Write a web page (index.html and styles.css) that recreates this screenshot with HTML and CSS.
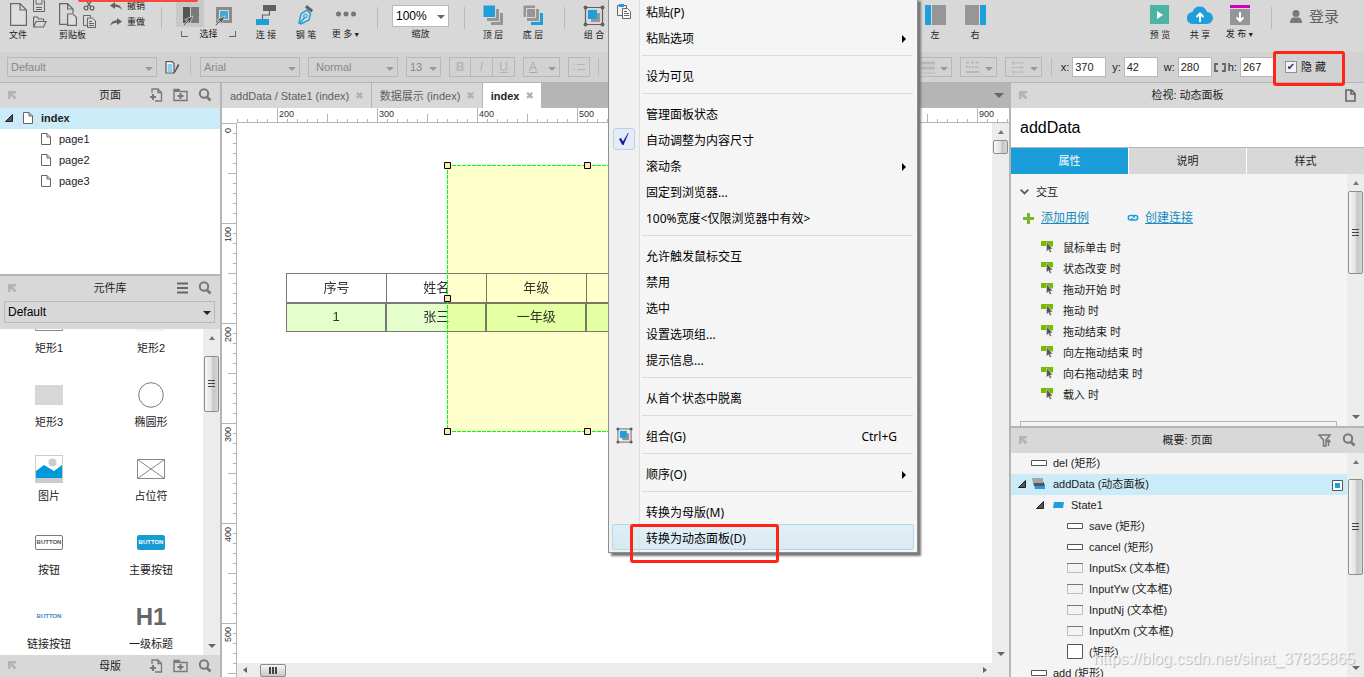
FILE: index.html
```html
<!DOCTYPE html>
<html lang="zh-CN">
<head>
<meta charset="utf-8">
<title>addData</title>
<link rel="stylesheet" href="styles.css">
</head>
<body>
<svg class="defs" aria-hidden="true">
  <symbol id="i-dock" viewBox="0 0 9 9"><path d="M0 0h8v2.500H4.500l4 4-2 2-4-4V8H0z" fill="#b4b4b4"/></symbol>
  <symbol id="i-search" viewBox="0 0 14 14"><circle cx="6" cy="5.500" r="4.200" fill="none" stroke="#787878" stroke-width="2"/><path d="M9 9l3.500 3.500" stroke="#787878" stroke-width="2.600"/></symbol>
  <symbol id="i-addpage" viewBox="0 0 14 14"><path d="M3 5V1h6l3.500 3.500V13H6M9 1v3.500h3.500" fill="none" stroke="#787878" stroke-width="1.300"/><path d="M4 6v6M1 9h6" stroke="#787878" stroke-width="2"/></symbol>
  <symbol id="i-addfolder" viewBox="0 0 15 14"><path d="M1 12.500V1.500h5l1 2h7v9z" fill="none" stroke="#787878" stroke-width="1.400"/><path d="M1 2h5v2H1z" fill="#787878"/><path d="M7.500 5v6M4.500 8h6" stroke="#787878" stroke-width="2"/></symbol>
  <symbol id="i-page" viewBox="0 0 10 12"><path d="M.5.5h5.500l3.500 3.500v7.500H.5zM6 .5V4h3.500" fill="#fff" stroke="#666"/></symbol>
  <symbol id="i-open" viewBox="0 0 8 8"><path d="M.5 7.500L7.500.5v7z" fill="#555" stroke="#222"/></symbol>
  <symbol id="i-event" viewBox="0 0 12 12"><path d="M0 0h12v5.500H7L5 2v3H0z" fill="#77bc04"/><path d="M5.500 1v9.500l2-2 1.500 3 1.500-.8-1.400-2.700h2.600z" fill="#555" stroke="#eee" stroke-width=".4"/></symbol>
  <symbol id="i-rect" viewBox="0 0 16 6"><path d="M.5.5h15v5H.5z" fill="#fff" stroke="#555"/></symbol>
  <symbol id="i-field" viewBox="0 0 16 10"><path d="M.5.5h15v9H.5z" fill="#f4f4f4" stroke="#bdbdbd"/><path d="M0 .5h16" stroke="#777"/></symbol>
  <symbol id="i-group" viewBox="0 0 22 22"><path d="M2.500 2.500h17v17h-17z" fill="none" stroke="#606060" stroke-width="1.200"/><path d="M8 8h9v9H8z" fill="#969696"/><path d="M5 5h9v9H5z" fill="#1e9edb"/><g fill="#606060"><circle cx="2.500" cy="2.500" r="2"/><circle cx="19.500" cy="2.500" r="2"/><circle cx="2.500" cy="19.500" r="2"/><circle cx="19.500" cy="19.500" r="2"/></g></symbol>
  <symbol id="i-cursor" viewBox="0 0 12 12"><path d="M0 11l5-5-3-1 9-4-4 9-1-3-5 5z" fill="#555" stroke="#e6e6e6" stroke-width=".7"/></symbol>
</svg>

<header class="toolbar">
  <div class="pair file">
    <button class="tool"><svg width="17" height="23" viewBox="0 0 17 23"><path d="M.6.600h9.400l6.400 6.400v15.400H.6zM10 .6V7h6.400" fill="#dedede" stroke="#666" stroke-width="1.200"/></svg><span>文件</span></button>
    <div class="stack">
      <svg width="12" height="12" viewBox="0 0 12 12"><path d="M.5 0v11.500h11V1l-1-1M3 0v4h6V0M3 7.500h6M3 9.500h6" fill="none" stroke="#666"/></svg>
      <svg width="14" height="12" viewBox="0 0 14 12"><path d="M.6 11V1h4l1 2h5v2.500M.6 11l2.500-5.500h10L10.500 11z" fill="none" stroke="#666" stroke-width="1.100"/></svg>
    </div>
  </div>
  <div class="pair clip">
    <button class="tool start"><svg width="18" height="23" viewBox="0 0 18 23"><path d="M8 21.400H.6V.6h8l5.400 5.400v4M8.600.6v5.400H14" fill="none" stroke="#666" stroke-width="1.200"/><path d="M8.600 11h5.400l3.400 3.400v8H8.600z" fill="#dedede" stroke="#666" stroke-width="1.200"/></svg><span>剪贴板</span></button>
    <div class="stack">
      <svg width="12" height="12" viewBox="0 0 12 12"><path d="M2 0l6 8M10 0L4 8" stroke="#666" stroke-width="1.300"/><g fill="none" stroke="#666" stroke-width="1.300"><circle cx="3" cy="9" r="1.900"/><circle cx="9" cy="9" r="1.900"/></g></svg>
      <svg width="13" height="13" viewBox="0 0 13 13"><path d="M4 10.500H.5V.5h7v2M4.500 3h5l3 3v6.500h-8zM6 6.500h3M6 8.500h5M6 10.500h5" fill="none" stroke="#666"/></svg>
    </div>
  </div>
  <div class="history">
    <button><svg width="12" height="9" viewBox="0 0 12 9"><path d="M5 0L0 3.500 5 7V4.700c3 0 5 .8 7 3.300C11 4.500 9 2.500 5 2.300z" fill="#606060"/></svg>撤销</button>
    <button><svg width="12" height="9" viewBox="0 0 12 9"><path d="M7 0l5 3.500L7 7V4.700C4 4.700 2 5.500 0 8c1-3.500 3-5.500 7-5.700z" fill="#606060"/></svg>重做</button>
  </div>
  <i class="divider"></i>
  <div class="select-mode">
    <div class="modes">
      <button class="on" aria-label="相交选中"><svg width="18" height="20" viewBox="0 0 18 20"><path d="M0 0h7v16H0z" fill="#555"/><path d="M8 0h8v16H8z" fill="#7a7a7a"/><use href="#i-cursor" x="0" y="8" width="11" height="11"/></svg></button>
      <button aria-label="包含选中"><svg width="18" height="20" viewBox="0 0 18 20"><path d="M2.500 1.500h13v13h-13z" fill="#d8d8d8" stroke="#8a8a8a" stroke-width="3"/><path d="M5 4h8v8H5z" fill="#3fa9de"/><use href="#i-cursor" x="0" y="8" width="11" height="11"/></svg></button>
    </div>
    <div class="mode-label"><i></i><span>选择</span><i class="r"></i></div>
  </div>
  <button class="tool"><svg width="20" height="20" viewBox="0 0 20 20"><path d="M7 0h13v6H7z" fill="#606060"/><path d="M0 14h13v6H0z" fill="#1e9edb"/><path d="M13.500 6v4h-7v4" fill="none" stroke="#606060" stroke-width="1.200"/></svg><span>连 接</span></button>
  <button class="tool"><svg width="16" height="20" viewBox="0 0 16 20"><path d="M9 0l6 5-1.500 2.500L7 2.500z" fill="#606060"/><path d="M1 18L3 9l6-4 3.500 4L11 15l-8 4zM2 18l5-6" fill="none" stroke="#1e9edb" stroke-width="1.400"/><circle cx="7.500" cy="11" r="1.800" fill="none" stroke="#1e9edb"/></svg><span>钢 笔</span></button>
  <button class="tool"><svg width="20" height="20" viewBox="0 0 20 20"><g fill="#757575"><circle cx="2.500" cy="9" r="2.500"/><circle cx="10" cy="9" r="2.500"/><circle cx="17.500" cy="9" r="2.500"/></g></svg><span>更 多<b>▼</b></span></button>
  <i class="divider"></i>
  <div class="zoom">
    <span class="drop"><select id="zoom"><option>100%</option></select></span>
    <label for="zoom">缩放</label>
  </div>
  <i class="divider"></i>
  <button class="tool"><svg width="20" height="20" viewBox="0 0 20 20"><path d="M8 8h12v12H8z" fill="#969696"/><path d="M3.500 3.500h13v13h-13z" fill="#969696" stroke="#d8d8d8"/><path d="M0 0h12.500v12.500H0z" fill="#1e9edb" stroke="#d8d8d8"/></svg><span>顶 层</span></button>
  <button class="tool"><svg width="20" height="20" viewBox="0 0 20 20"><path d="M8 8h12v12H8z" fill="#1e9edb"/><path d="M3.500 3.500h13v13h-13zM0 0h12.500v12.500H0z" fill="#969696" stroke="#d8d8d8"/></svg><span>底 层</span></button>
  <i class="divider"></i>
  <button class="tool"><svg width="22" height="22"><use href="#i-group"/></svg><span>组 合</span></button>
  <div class="align">
    <button class="tool"><svg width="21" height="20" viewBox="0 0 21 20"><path d="M0 0h6v20H0z" fill="#1e9edb"/><path d="M7 0h14v20H7z" fill="#969696"/></svg><span>左</span></button>
    <button class="tool"><svg width="21" height="20" viewBox="0 0 21 20"><path d="M15 0h6v20h-6z" fill="#1e9edb"/><path d="M0 0h14v20H0z" fill="#969696"/></svg><span>右</span></button>
  </div>
  <div class="publish">
    <button class="tool"><svg width="19" height="19" viewBox="0 0 19 19"><path d="M0 0h19v19H0z" fill="#4db3a4"/><path d="M7 6l6 4-6 4z" fill="#fff"/></svg><span>预 览</span></button>
    <button class="tool"><svg width="26" height="20" viewBox="0 0 26 20"><path d="M6 19a6 6 0 01-.5-12A7.500 7.500 0 0120 7a6 6 0 010 12z" fill="#1e9edb"/><path d="M13 17V9M9.500 12L13 8.500l3.500 3.500" fill="none" stroke="#fff" stroke-width="2"/></svg><span>共 享</span></button>
    <button class="tool"><svg width="20" height="20" viewBox="0 0 20 20"><path d="M0 0h20v3H0z" fill="#d400b8"/><path d="M0 4h20v16H0z" fill="#969696"/><path d="M10 7v9M6.500 12.500L10 16l3.500-3.500" fill="none" stroke="#fff" stroke-width="2"/></svg><span>发 布<b>▼</b></span></button>
    <i class="divider"></i>
    <button class="login"><svg width="12" height="13" viewBox="0 0 12 13"><circle cx="6" cy="3.500" r="3.500" fill="#7a7a7a"/><path d="M0 13c0-4 2-5.500 4-5.500h4c2 0 4 1.500 4 5.500z" fill="#7a7a7a"/></svg>登录</button>
  </div>
</header>

<div class="format">
  <div class="format-left">
    <span class="drop w150"><select aria-label="样式"><option>Default</option></select></span>
    <button class="plain" aria-label="样式管理"><svg width="15" height="13" viewBox="0 0 15 13"><path d="M1 .6h6l2 2V12H1z" fill="#fff" stroke="#555" stroke-width="1.200"/><path d="M2.500 4h5M2.500 6h5M2.500 8h5M2.500 10h5" stroke="#1e9edb"/><path d="M9 11l4-8 1.500 1-4 7-2 1.500z" fill="#555"/></svg></button>
    <i class="divider"></i>
    <span class="drop w100"><select aria-label="字体"><option>Arial</option></select></span>
    <span class="drop w90"><select aria-label="字形"><option>Normal</option></select></span>
    <span class="drop w35"><select aria-label="字号"><option>13</option></select></span>
    <div class="biu"><button><b>B</b></button><button><em>I</em></button><button><u>U</u></button></div>
    <button class="swatch"><u>A</u></button>
    <button class="bullets" aria-label="项目符号"><svg width="12" height="8" viewBox="0 0 12 8"><path d="M4 1.500h8M4 6.500h8" stroke="#b4b4b4"/><path d="M0 1.500h2M0 6.500h2" stroke="#9cc8dc"/></svg></button>
    <i class="divider"></i>
  </div>
  <div class="format-right">
    <button class="swatch" aria-label="线宽"><svg width="14" height="13" viewBox="0 0 14 13"><path d="M0 2h14M0 7h14" stroke="#b8b8b8" stroke-width="3"/><path d="M0 12h14" stroke="#b8b8b8"/></svg></button>
    <button class="swatch" aria-label="线型"><svg width="13" height="13" viewBox="0 0 13 13"><path d="M0 1.500h13" stroke="#b8b8b8" stroke-width="2" stroke-dasharray="3 2"/><path d="M0 6h13" stroke="#b8b8b8" stroke-width="2" stroke-dasharray="2 1"/><path d="M0 11h13" stroke="#b8b8b8" stroke-width="2"/></svg></button>
    <button class="swatch" aria-label="箭头"><svg width="13" height="13" viewBox="0 0 13 13"><path d="M1 2h12M0 6.500h12M1 11h12M3 0L1 2l2 2M10 4.500l2 2-2 2M3 9l-2 2 2 2" fill="none" stroke="#b8b8b8"/></svg></button>
    <i class="divider"></i>
    <label>x:<input value="370"></label>
    <label>y:<input value="42"></label>
    <label>w:<input value="280"></label>
    <svg class="lock" width="12" height="9" viewBox="0 0 12 9"><path d="M4 1H1v7h3M8 1h3v7H8" fill="none" stroke="#666" stroke-width="1.800"/></svg>
    <label class="h">h:<input value="267"></label>
    <label class="hide"><input type="checkbox" checked>隐 藏</label>
  </div>
</div>

<main class="work">
  <aside class="left">
    <div class="head"><svg width="9" height="9"><use href="#i-dock"/></svg><h2>页面</h2><div class="acts"><svg width="14" height="14"><use href="#i-addpage"/></svg><svg width="15" height="14"><use href="#i-addfolder"/></svg><svg width="14" height="14"><use href="#i-search"/></svg></div></div>
    <ul class="pages">
      <li class="root"><svg width="8" height="8"><use href="#i-open"/></svg><svg width="10" height="12"><use href="#i-page"/></svg>index</li>
      <li><svg width="10" height="12"><use href="#i-page"/></svg>page1</li>
      <li><svg width="10" height="12"><use href="#i-page"/></svg>page2</li>
      <li><svg width="10" height="12"><use href="#i-page"/></svg>page3</li>
    </ul>
    <div class="head lib"><svg width="9" height="9"><use href="#i-dock"/></svg><h2>元件库</h2><div class="acts"><svg width="11" height="12" viewBox="0 0 11 12"><path d="M0 1.500h11M0 6h11M0 10.500h11" stroke="#666" stroke-width="2"/></svg><svg width="14" height="14"><use href="#i-search"/></svg></div></div>
    <div class="libpick"><span class="drop"><select aria-label="元件库"><option>Default</option></select></span></div>
    <div class="library">
      <div class="widgets">
        <figure><svg width="28" height="20" viewBox="0 0 28 20"><path d="M.5.500h27v19H.5z" fill="#fff" stroke="#888"/></svg><figcaption>矩形1</figcaption></figure>
        <figure><svg width="28" height="20"><path d="M0 0h28v20H0z" fill="#f2f2f2"/></svg><figcaption>矩形2</figcaption></figure>
        <figure><svg width="28" height="20"><path d="M0 0h28v20H0z" fill="#d7d7d7"/></svg><figcaption>矩形3</figcaption></figure>
        <figure><svg width="26" height="26"><circle cx="13" cy="13" r="12.300" fill="#fff" stroke="#797979"/></svg><figcaption>椭圆形</figcaption></figure>
        <figure><svg width="28" height="28" viewBox="0 0 28 28"><path d="M0 0h28v28H0z" fill="#ccc"/><path d="M1 1h26v22H1z" fill="#fff"/><circle cx="17.500" cy="7.500" r="4" fill="#ccc"/><path d="M1 16l8-6 10 6 8-6v13H1z" fill="#0099dc"/></svg><figcaption>图片</figcaption></figure>
        <figure><svg width="28" height="20"><path d="M.5.500h27v19H.5zL27.500 19.500M27.500.5L.5 19.500" fill="none" stroke="#888"/></svg><figcaption>占位符</figcaption></figure>
        <figure><span class="mini plain-btn">BUTTON</span><figcaption>按钮</figcaption></figure>
        <figure><span class="mini primary">BUTTON</span><figcaption>主要按钮</figcaption></figure>
        <figure><span class="mini link">BUTTON</span><figcaption>链接按钮</figcaption></figure>
        <figure><span class="h1">H1</span><figcaption>一级标题</figcaption></figure>
      </div>
      <div class="vbar"><i class="up"></i><i class="thumb t1"></i><i class="down"></i></div>
    </div>
    <div class="head foot"><svg width="9" height="9"><use href="#i-dock"/></svg><h2>母版</h2><div class="acts"><svg width="14" height="14"><use href="#i-addpage"/></svg><svg width="15" height="14"><use href="#i-addfolder"/></svg><svg width="14" height="14"><use href="#i-search"/></svg></div></div>
  </aside>

  <section class="center">
    <nav class="tabs">
      <button>addData / State1 (index)<span>✖</span></button>
      <button>数据展示 (index)<span>✖</span></button>
      <button class="active">index<span>✖</span></button>
      <i class="more"></i>
    </nav>
    <div class="stage">
      <div class="corner"></div>
      <svg class="hruler" width="100%" height="15">
        <defs><pattern id="hp" x="40" width="100" height="15" patternUnits="userSpaceOnUse"><path d="M.5 0v15M50.500 6v9M10.500 11v4M20.500 11v4M30.500 11v4M40.500 11v4M60.500 11v4M70.500 11v4M80.500 11v4M90.500 11v4" stroke="#b5b5b5"/></pattern></defs>
        <rect width="100%" height="15" fill="url(#hp)"/><path d="M0 14.500h3000" stroke="#b5b5b5"/>
        <text x="42" y="9">200</text><text x="142" y="9">300</text><text x="242" y="9">400</text><text x="342" y="9">500</text><text x="742" y="9">900</text>
      </svg>
      <svg class="vruler" width="15" height="100%">
        <defs><pattern id="vp" width="15" height="100" patternUnits="userSpaceOnUse"><path d="M0 .5h15M6 50.500h9M11 10.500h4M11 20.500h4M11 30.500h4M11 40.500h4M11 60.500h4M11 70.500h4M11 80.500h4M11 90.500h4" stroke="#b5b5b5"/></pattern></defs>
        <rect width="15" height="100%" fill="url(#vp)"/><path d="M14.500 0v3000" stroke="#b5b5b5"/>
        <text transform="translate(9 10) rotate(-90)">0</text><text transform="translate(9 119) rotate(-90)">100</text><text transform="translate(9 219) rotate(-90)">200</text><text transform="translate(9 319) rotate(-90)">300</text><text transform="translate(9 419) rotate(-90)">400</text><text transform="translate(9 519) rotate(-90)">500</text>
      </svg>
      <div class="canvas">
        <table class="grid">
          <tr><th>序号</th><th>姓名</th><th>年级</th><th></th></tr>
          <tr><td>1</td><td>张三</td><td>一年级</td><td></td></tr>
        </table>
        <div class="panel"></div>
        <svg class="outline-box" width="288" height="274" viewBox="0 0 288 274"><path d="M4 4.500h280M4 270.500h280M4.500 4v267M284.500 4v267" stroke="#0f0" stroke-dasharray="4 1"/><g fill="#ffe9b0" stroke="#000"><path d="M1.500 1.500h6v6h-6zM141.500 1.500h6v6h-6zM1.500 134.500h6v6h-6zM1.500 267.500h6v6h-6zM141.500 267.500h6v6h-6z"/></g></svg>
      </div>
      <div class="vbar"><i class="up"></i><i class="thumb t2"></i><i class="down"></i></div>
      <div class="hbar"><i class="lt"></i><i class="thumb"></i><i class="rt"></i></div>
    </div>
  </section>

  <aside class="right">
    <div class="head"><svg width="9" height="9"><use href="#i-dock"/></svg><h2>检视: 动态面板</h2><div class="acts"><svg width="11" height="13" viewBox="0 0 11 13"><path d="M1 1h5.500L10 4.500V12H1zM6 1v4h4" fill="none" stroke="#666" stroke-width="1.600"/></svg></div></div>
    <div class="name">addData</div>
    <div class="ptabs"><button class="on">属性</button><button>说明</button><button>样式</button></div>
    <div class="props">
      <div class="body">
        <h3><svg width="9" height="6" viewBox="0 0 9 6"><path d="M.7.700l3.800 3.800L8.300.7" fill="none" stroke="#555c68" stroke-width="1.800"/></svg>交互</h3>
        <div class="links"><svg width="11" height="11"><path d="M5.500 0v11M0 5.500h11" stroke="#77b82a" stroke-width="3"/></svg><a href="#">添加用例</a><svg class="chain" width="12" height="8" viewBox="0 0 12 8"><path d="M7 6H3.500a2.200 2.200 0 010-4.400H5A2.200 2.200 0 017.200 4M5 1.600h3.500a2.200 2.200 0 010 4.400H7A2.200 2.200 0 014.800 4" fill="none" stroke="#1e9edb" stroke-width="1.500"/></svg><a href="#">创建连接</a></div>
        <ul class="events">
          <li><svg width="12" height="12"><use href="#i-event"/></svg>鼠标单击 时</li>
          <li><svg width="12" height="12"><use href="#i-event"/></svg>状态改变 时</li>
          <li><svg width="12" height="12"><use href="#i-event"/></svg>拖动开始 时</li>
          <li><svg width="12" height="12"><use href="#i-event"/></svg>拖动 时</li>
          <li><svg width="12" height="12"><use href="#i-event"/></svg>拖动结束 时</li>
          <li><svg width="12" height="12"><use href="#i-event"/></svg>向左拖动结束 时</li>
          <li><svg width="12" height="12"><use href="#i-event"/></svg>向右拖动结束 时</li>
          <li><svg width="12" height="12"><use href="#i-event"/></svg>载入 时</li>
        </ul>
        <div class="moreevents"></div>
      </div>
      <div class="vbar"><i class="up"></i><i class="thumb t3"></i><i class="down"></i></div>
    </div>
    <div class="head outline-head"><svg width="9" height="9"><use href="#i-dock"/></svg><h2>概要: 页面</h2><div class="acts"><svg width="14" height="13" viewBox="0 0 14 13"><path d="M1 1h11L8 6v6H5.500V6zM10.500 12V6M8.500 8l2-2 2 2" fill="none" stroke="#787878" stroke-width="1.500"/></svg><svg width="14" height="14"><use href="#i-search"/></svg></div></div>
    <div class="outline">
      <ul class="tree">
        <li class="d1"><svg width="16" height="6"><use href="#i-rect"/></svg>del (矩形)</li>
        <li class="d1 sel"><svg class="tri" width="8" height="8"><use href="#i-open"/></svg><svg width="13" height="12" viewBox="0 0 13 12"><path d="M2 6h11v5H3z" fill="#1e9edb"/><path d="M1 4h11v4H2z" fill="#555"/><path d="M0 0h11v5H1z" fill="#a5a5a5"/></svg>addData (动态面板)<svg class="vis" width="11" height="11"><path d="M.5.500h10v10H.5z" fill="#fff" stroke="#555"/><path d="M3 3h5v5H3z" fill="#1e9edb"/></svg></li>
        <li class="d2"><svg class="tri" width="8" height="8"><use href="#i-open"/></svg><svg width="11" height="7"><path d="M1 0h10l-1 6H0z" fill="#1e9edb"/></svg>State1</li>
        <li class="d3"><svg width="16" height="6"><use href="#i-rect"/></svg>save (矩形)</li>
        <li class="d3"><svg width="16" height="6"><use href="#i-rect"/></svg>cancel (矩形)</li>
        <li class="d3"><svg width="16" height="10"><use href="#i-field"/></svg>InputSx (文本框)</li>
        <li class="d3"><svg width="16" height="10"><use href="#i-field"/></svg>InputYw (文本框)</li>
        <li class="d3"><svg width="16" height="10"><use href="#i-field"/></svg>InputNj (文本框)</li>
        <li class="d3"><svg width="16" height="10"><use href="#i-field"/></svg>InputXm (文本框)</li>
        <li class="d3"><svg width="16" height="16"><path d="M.5.500h15v14H.5z" fill="#fff" stroke="#555"/></svg>(矩形)</li>
        <li class="d1"><svg width="16" height="6"><use href="#i-rect"/></svg>add (矩形)</li>
      </ul>
      <div class="vbar"><i class="up"></i><i class="thumb t4"></i><i class="down"></i></div>
    </div>
  </aside>
</main>

<ul class="menu">
  <li><i><svg width="14" height="15" viewBox="0 0 14 15"><path d="M5 11.500H.5V1.500h9V4" fill="none" stroke="#666"/><path d="M2 0h5v3H2z" fill="#1e9edb"/><path d="M5.500 4.500h5l3 3v7h-8zM7 7.500h3M7 9.500h5M7 11.500h5" fill="#fff" stroke="#666"/></svg></i><span>粘贴(P)</span></li>
  <li><i></i><span>粘贴选项</span><b></b></li>
  <li class="sep"></li>
  <li><i></i><span>设为可见</span></li>
  <li class="sep"></li>
  <li><i></i><span>管理面板状态</span></li>
  <li><i class="checked"><svg width="10" height="12" viewBox="0 0 10 12"><path d="M0 6l2-1 2 3.500L9 0h.7L4.500 12H3.300z" fill="#1417a8"/></svg></i><span>自动调整为内容尺寸</span></li>
  <li><i></i><span>滚动条</span><b></b></li>
  <li><i></i><span>固定到浏览器...</span></li>
  <li><i></i><span>100%宽度&lt;仅限浏览器中有效&gt;</span></li>
  <li class="sep"></li>
  <li><i></i><span>允许触发鼠标交互</span></li>
  <li><i></i><span>禁用</span></li>
  <li><i></i><span>选中</span></li>
  <li><i></i><span>设置选项组...</span></li>
  <li><i></i><span>提示信息...</span></li>
  <li class="sep"></li>
  <li><i></i><span>从首个状态中脱离</span></li>
  <li class="sep"></li>
  <li><i><svg width="17" height="17"><use href="#i-group"/></svg></i><span>组合(G)</span><kbd>Ctrl+G</kbd></li>
  <li class="sep"></li>
  <li><i></i><span>顺序(O)</span><b></b></li>
  <li class="sep"></li>
  <li><i></i><span>转换为母版(M)</span></li>
  <li class="hot"><i></i><span>转换为动态面板(D)</span></li>
</ul>
<div class="mark mark-menu"></div>
<div class="mark mark-hide"></div>
<div class="blob"></div>
<div class="watermark">https://blog.csdn.net/sinat_37835865</div>
</body>
</html>
```
FILE: styles.css
```css
* { box-sizing: border-box; margin: 0; padding: 0; }
body {
  height: 100vh; overflow: hidden; position: relative;
  display: flex; flex-direction: column;
  font: 11px/14px "Liberation Sans", "Noto Sans CJK SC", sans-serif;
  color: #222; background: #d8d8d8;
}
.defs { position: absolute; width: 0; height: 0; }
button, select, input { font: inherit; color: inherit; background: none; border: 0; border-radius: 0; outline: 0; }
select { appearance: none; }
ul { list-style: none; }
svg { flex: none; display: block; }
h2, h3 { font-size: 11px; font-weight: 400; }

/* top toolbar */
.toolbar { flex: none; height: 52px; display: flex; font-size: 9px; line-height: 12px; }
.tool { flex: none; width: 40px; padding-top: 5px; display: flex; flex-direction: column; align-items: center; white-space: nowrap; }
.tool > svg { margin-bottom: auto; }
.tool > span { margin-bottom: 11px; }
.tool b { font-size: 7px; font-weight: 400; margin-left: 1px; }
.pair { display: flex; }
.pair .tool { width: 30px; padding-top: 3px; }
.pair .tool.start { width: 24px; align-items: flex-start; }
.file { padding-left: 3px; width: 59px; }
.clip { width: 51px; }
.stack { display: flex; flex-direction: column; gap: 4px; height: 28px; justify-content: flex-end; }
.history { width: 51px; display: flex; flex-direction: column; gap: 4px; }
.history button { display: flex; align-items: center; gap: 5px; height: 12px; }
.divider { flex: none; width: 1px; height: 22px; background: #bababa; margin-top: 7px; }
.select-mode { width: 84px; padding: 0 10px 0 14px; }
.modes { display: flex; gap: 4px; }
.modes button { width: 30px; height: 27px; padding: 6px 0 0 7px; }
.modes .on { background: #c8c8c8; }
.mode-label { display: flex; align-items: center; justify-content: space-between; padding: 1px 0 0 5px; width: 60px; }
.mode-label i { width: 7px; height: 6px; border: solid #666; border-width: 0 0 1px 1px; }
.mode-label .r { border-width: 0 1px 1px 0; }
.tool + .divider { margin-left: 11px; }
.zoom { width: 86px; padding: 5px 15px 0 14px; display: flex; flex-direction: column; align-items: center; }
.zoom label { margin-top: 1px; }
.zoom .drop { width: 57px; height: 22px; background: #fff; font-size: 12px; color: #000; }
.zoom + .divider + .tool { margin-left: 8px; }
.tool + .divider + .tool { margin-left: 9px; }
.align { display: flex; margin-left: 301px; }
.publish { display: flex; margin-left: auto; padding-right: 25px; }
.login { display: flex; align-items: center; gap: 7px; margin-left: 18px; height: 33px; font-size: 15px; color: #606060; }

.drop { position: relative; flex: none; display: block; height: 20px; border: 1px solid #b8b8b8; }
.drop select { width: 100%; height: 100%; padding-left: 3px; }
.drop::after, .swatch::after { content: ""; position: absolute; right: 3px; top: 9px; border: 4px solid transparent; border-top-color: #999; border-bottom: 0; pointer-events: none; }

/* format bar */
.format { flex: none; height: 31px; padding: 5px 38px 5px 7px; display: flex; justify-content: space-between; background: #d2d2d2; border-bottom: 1px solid #b5b5b5; }
.format .divider { height: 18px; margin-top: 1px; }
.format-left, .format-right { display: flex; color: #888; }
.format-left { gap: 8px; }
.plain + .divider { margin: 0 1px 0 2px; }
.w150 { width: 150px; } .w100 { width: 100px; } .w90 { width: 90px; } .w35 { width: 35px; }
.w90 select { padding-left: 7px; }
.plain { display: flex; align-items: center; }
.biu { display: flex; color: #b4b4b4; }
.biu button { width: 22px; height: 20px; border: 1px solid #b8b8b8; font-size: 12px; }
.biu button + button { border-left: 0; }
.swatch { position: relative; width: 37px; height: 20px; border: 1px solid #b8b8b8; display: flex; align-items: center; padding-left: 5px; font-size: 12px; color: #aaa; }
.bullets { width: 22px; height: 20px; border: 1px solid #b8b8b8; display: flex; align-items: center; justify-content: center; }
.format-right .swatch { margin-right: 8px; }
.format-right .divider { margin: 1px 9px 0 1px; }
.format-right label { display: flex; align-items: center; gap: 3px; margin-right: 6px; color: #222; }
.format-right label input { width: 34px; height: 20px; border: 1px solid #b8b8b8; background: #fff; padding-left: 2px; }
.format-right .h { margin: 0 11px 0 2px; }
.lock { margin: 6px 0 0 -4px; }
.format-right .hide { margin: 0; gap: 4px; }
.format-right .hide input { appearance: none; width: 12px; height: 12px; padding: 0; border: 1px solid #8f9094; background: #f3f4f8; display: grid; place-items: center; }
.hide input::before { content: "✔"; font: 10px/10px "DejaVu Sans", sans-serif; color: #2a2b80; }

/* work area */
.work { flex: 1; min-height: 0; display: grid; grid-template-columns: 220px minmax(0, 1fr) 353px; gap: 2px; background: #b5b5b5; }
.left, .right, .center { display: flex; flex-direction: column; min-height: 0; overflow: hidden; }
.head { flex: none; height: 25px; display: grid; grid-template-columns: 60px 1fr 60px; align-items: center; padding: 0 8px 1px; background: #d8d8d8; }
.head h2 { text-align: center; }
.acts { display: flex; align-items: center; justify-content: flex-end; gap: 10px; }
.pages { flex: none; height: 166px; background: #fff; }
.pages li { display: flex; align-items: center; gap: 8px; height: 21px; padding: 0 0 2px 41px; }
.pages .root { background: #cbebf8; font-weight: 700; padding-left: 5px; }
.pages .root svg + svg { margin-left: 2px; }
.lib { margin-top: 2px; }
.libpick { flex: none; height: 28px; padding: 0 5px 0 4px; background: #d8d8d8; font-size: 12px; color: #000; }
.libpick .drop { height: 22px; }
.libpick .drop::after { border-top-color: #222; }
.zoom .drop::after { border-top-color: #666; }
.library { flex: 1; min-height: 0; display: flex; background: #fff; overflow: hidden; }
.widgets { flex: 1; display: grid; grid-template-columns: 102px 102px; grid-auto-rows: 74px; margin: -46px 0 0 -2px; align-content: start; }
figure { display: flex; flex-direction: column; align-items: center; padding: 18px 0 1px; }
figure > :first-child { margin: auto; }
figcaption { line-height: 16px; }
.mini { width: 28px; height: 15px; border-radius: 2px; font: 700 6px/13px "Liberation Sans", sans-serif; text-align: center; border: 1px solid transparent; }
.mini.plain-btn { border-color: #797979; color: #555; background: #fff; }
.mini.primary { background: #169bd5; color: #fff; }
.mini.link { color: #3f87c2; }
.h1 { font-weight: 700; font-size: 24px; line-height: 24px; color: #666; }
.foot { height: 22px; }

/* scrollbars */
.vbar { flex: none; width: 17px; display: flex; flex-direction: column; align-items: center; background: #ececec; padding: 7px 0; }
.vbar .up { border: 3px solid transparent; border-bottom: 4px solid #777; border-top: 0; }
.vbar .down { border: 4px solid transparent; border-top-color: #666; border-bottom: 0; margin-top: auto; }
.thumb { display: grid; place-items: center; border: 1px solid #8d8d8d; border-radius: 2px; background: linear-gradient(90deg, #f6f6f6, #e2e2e4 50%, #c3c5c8 60%, #d6d6d8); }
.vbar .thumb { width: 15px; }
.vbar .thumb::before { content: ""; width: 7px; height: 8px; background: repeating-linear-gradient(#444 0 1px, transparent 1px 3px); }
.t1 { height: 56px; margin-top: 16px; }
.t2 { height: 14px; margin-top: 6px; }
.vbar .t2::before { display: none; }
.t3 { height: 83px; margin-top: 6px; }
.t4 { height: 96px; margin-top: 15px; }

/* document tabs */
.tabs { flex: none; height: 25px; display: flex; background: #b5b5b5; padding-right: 5px; }
.tabs button { display: flex; align-items: center; gap: 6px; padding: 1px 7px 0 8px; border-right: 1px solid #b5b5b5; background: #d8d8d8; color: #606060; }
.tabs .active { background: #fff; color: #222; font-weight: 700; }
.tabs span { font: 10px/14px "DejaVu Sans", sans-serif; color: #b0b0b0; }
.more { margin: auto 0 auto auto; border: 5px solid transparent; border-top-color: #666; border-bottom: 0; }
.stage { flex: 1; min-height: 0; display: grid; grid-template: 15px minmax(0, 1fr) 14px / 15px minmax(0, 1fr) 17px; background: #fff; }
.hruler { grid-column: 2 / 4; }
.vruler { grid-row: 2 / 4; }
.stage text { font: 9px "Liberation Sans", sans-serif; fill: #333; }
.canvas { position: relative; overflow: hidden; isolation: isolate; background: #fff; }
.hbar { grid-column: 2 / 4; display: flex; align-items: center; background: #ececec; padding: 0 22px 0 6px; }
.hbar .lt { border: 3px solid transparent; border-right: 4px solid #666; border-left: 0; }
.hbar .rt { border: 3px solid transparent; border-left: 4px solid #666; border-right: 0; margin-left: auto; }
.hbar .thumb { width: 26px; height: 13px; margin-left: 13px; background: linear-gradient(#f6f6f6, #c8c8ca); }
.hbar .thumb::before { content: ""; width: 8px; height: 7px; background: repeating-linear-gradient(90deg, #444 0 2px, transparent 2px 3px); }

/* objects on the canvas */
.grid { position: absolute; left: 49px; top: 150px; width: 401px; table-layout: fixed; border-collapse: collapse; font-size: 13px; color: #333; }
.grid th, .grid td { height: 29px; border: 1px solid #797979; font-weight: 400; text-align: center; }
.grid td { background: #e5ffcc; border-width: 2px 2px 1px; }
.grid td:first-child { border-left-width: 1px; }
.panel { position: absolute; left: 210px; top: 42px; width: 280px; height: 267px; background: #ffffcc; mix-blend-mode: multiply; }
.outline-box { position: absolute; left: 206px; top: 38px; }

/* inspector */
.name { flex: none; height: 40px; padding: 0 9px; font-size: 16px; line-height: 39px; color: #000; background: #fff; border-bottom: 1px solid #b5b5b5; }
.ptabs { flex: none; display: grid; grid-template-columns: repeat(3, 1fr); gap: 1px; height: 26px; background: #fff; }
.ptabs button { background: #d8d8d8; }
.ptabs .on { background: #1b9dd9; color: #fff; }
.props { flex: none; height: 252px; display: flex; overflow: hidden; background: #f4f4f4; }
.body { flex: 1; padding: 11px 10px 0 9px; }
.body h3 { display: flex; align-items: center; gap: 7px; }
.links { display: flex; align-items: center; padding: 11px 0 0 3px; font-size: 12px; line-height: 16px; }
.links a { color: #148cc0; margin-left: 7px; }
.chain { margin-left: 38px; }
.links .chain + a { margin-left: 6px; }
.events { padding: 11px 0 0 21px; }
.events li { display: flex; align-items: center; gap: 10px; height: 21px; }
.events svg { margin-bottom: 2px; }
.moreevents { margin-top: 16px; height: 22px; border: 1px solid #b5b5b5; }
.outline-head { margin-top: 2px; }
.outline { flex: 1; min-height: 0; display: flex; background: #f4f4f4; overflow: hidden; }
.tree { flex: 1; }
.tree li { display: flex; align-items: center; gap: 6px; height: 21px; padding-bottom: 1px; }
.d1 { padding-left: 20px; }
.d1.sel { padding-left: 7px; background: #cbebf8; }
.sel svg + svg { margin-right: 2px; }
.d2 { padding-left: 25px; }
.d2 svg + svg { margin: 0 1px 0 3px; }
.d3 { padding-left: 56px; }
.tree .vis { margin: 2px 4px 0 auto; }

/* context menu */
.menu { position: absolute; left: 608px; top: -2px; width: 310px; padding: 0 3px 2px; border: 1px solid #8f8f8f; border-top: 0; background: linear-gradient(90deg, #f0f0f0 30px, #dedede 30px 31px, #f5f5f5 31px); box-shadow: 3px 3px 2px #777; color: #000; font: 12px/16px "Noto Sans", "Noto Sans CJK SC", sans-serif; }
.menu li { height: 26px; display: grid; grid-template-columns: 34px 1fr auto; align-items: center; padding: 2px 8px 0 0; border-radius: 3px; }
.menu li > i { width: 22px; height: 22px; margin: 0 0 4px 1px; display: grid; place-items: center; }
.menu .checked { background: #e3edf8; border: 1px solid #c0cfe6; border-radius: 3px; }
.menu li.sep { height: 1px; margin: 5px 1px 6px 30px; padding: 0; background: #dadada; }
.menu b { border: 4px solid transparent; border-left-color: #000; border-right: 0; }
.menu kbd { font: inherit; margin-right: 9px; }
.menu li.hot { background: linear-gradient(rgba(214, 236, 247, .6), rgba(205, 230, 242, .7)); box-shadow: inset 0 0 0 1px #aadcee; }

/* annotations */
.mark { position: absolute; border: 3px solid #ff2415; border-radius: 3px; }
.mark-menu { left: 630px; top: 524px; width: 149px; height: 39px; }
.mark-hide { right: 19px; top: 51px; width: 72px; height: 35px; }
.blob { position: absolute; left: 78px; top: 0; width: 120px; height: 2px; background: #f84a35; border-radius: 0 0 12px 12px; }
.watermark { position: absolute; right: 9px; bottom: 9px; font: 16px/18px "Liberation Sans", sans-serif; color: rgba(255, 255, 255, .75); text-shadow: 1px 1px 1px rgba(120, 120, 120, .5); }
```
